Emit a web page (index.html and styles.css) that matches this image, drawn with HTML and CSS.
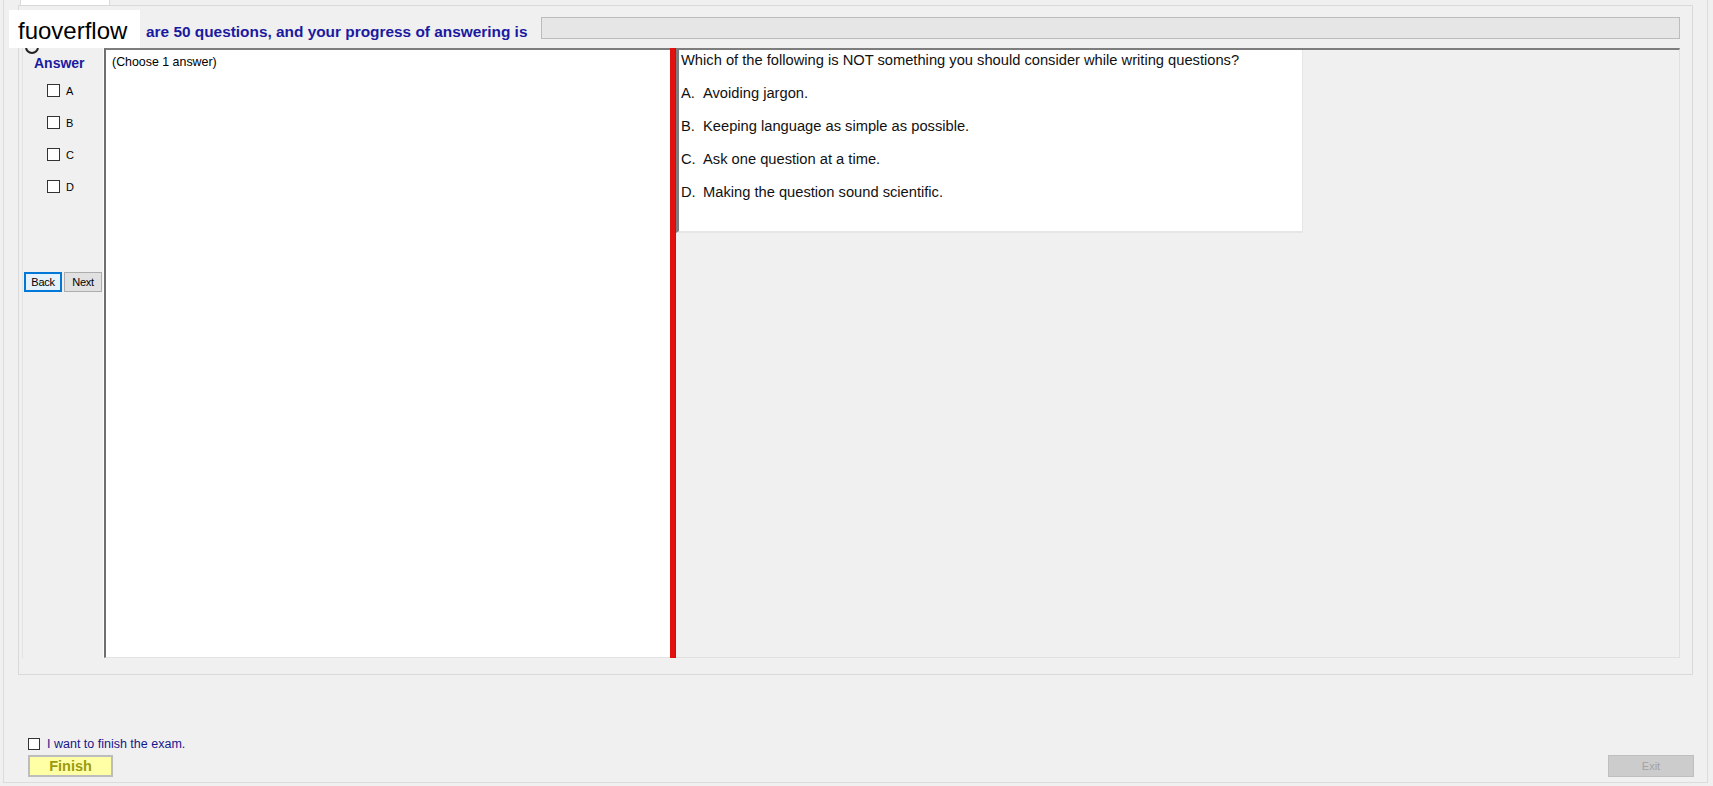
FILE: index.html
```html
<!DOCTYPE html>
<html>
<head>
<meta charset="utf-8">
<link rel="stylesheet" href="styles.css">
</head>
<body>
<div class="frame">
  <div class="tabctl">
    <div class="tabhead"><div class="tab"></div></div>
    <div class="tabpage">
      <div class="hdr">
        <div class="hdr-label">are 50 questions, and your progress of answering is</div>
        <div class="progress"></div>
      </div>
      <div class="split">
        <div class="answer-col">
          <div class="answer-title">Answer</div>
          <div class="opts">
            <label class="opt"><span class="cb"></span><span>A</span></label>
            <label class="opt"><span class="cb"></span><span>B</span></label>
            <label class="opt"><span class="cb"></span><span>C</span></label>
            <label class="opt"><span class="cb"></span><span>D</span></label>
          </div>
          <div class="navbtns">
            <button class="btn btn-back">Back</button>
            <button class="btn">Next</button>
          </div>
        </div>
        <div class="choose">(Choose 1 answer)</div>
        <div class="splitter"></div>
        <div class="qarea">
          <div class="qbox">
            <div class="qline">Which of the following is NOT something you should consider while writing questions?</div>
            <div class="qline"><span class="ql">A.</span>Avoiding jargon.</div>
            <div class="qline"><span class="ql">B.</span>Keeping language as simple as possible.</div>
            <div class="qline"><span class="ql">C.</span>Ask one question at a time.</div>
            <div class="qline"><span class="ql">D.</span>Making the question sound scientific.</div>
          </div>
        </div>
      </div>
      <div class="icon-peek"></div>
      <div class="watermark">fuoverflow</div>
    </div>
  </div>
  <div class="footer">
    <div class="footer-left">
      <label class="finish-check"><span class="cb"></span><span>I want to finish the exam.</span></label>
      <button class="finish">Finish</button>
    </div>
    <button class="exit" disabled>Exit</button>
  </div>
</div>
</body>
</html>
```
FILE: styles.css
```css
html, body {
  margin: 0;
  padding: 0;
}
body {
  width: 1713px;
  height: 786px;
  background: #f0f0f0;
  font-family: "Liberation Sans", Arial, sans-serif;
  overflow: hidden;
}
.frame {
  margin-left: 3px;
  width: 1705px;
  height: 783px;
  box-sizing: border-box;
  border-left: 1px solid #dcdcdc;
  border-right: 1px solid #dcdcdc;
  border-bottom: 1px solid #dcdcdc;
  display: flex;
  flex-direction: column;
}
.tabctl {
  margin-left: 14px;
  width: 1675px;
}
.tabhead {
  height: 5px;
  position: relative;
}
.tab {
  margin-left: 2px;
  width: 90px;
  height: 5px;
  box-sizing: border-box;
  background: #ffffff;
  border: 1px solid #d9d9d9;
  border-top: none;
  border-bottom: none;
}
.tabpage {
  position: relative;
  height: 670px;
  box-sizing: border-box;
  border: 1px solid #d9d9d9;
  background: #f0f0f0;
  padding: 11px 12px 0 3px;
}
.hdr {
  display: flex;
  height: 22px;
  align-items: center;
}
.hdr-label {
  width: 519px;
  box-sizing: border-box;
  padding-left: 124px;
  font-weight: bold;
  font-size: 15.4px;
  color: #1a1aa0;
  white-space: nowrap;
  padding-top: 7px;
}
.progress {
  flex: 1;
  height: 22px;
  box-sizing: border-box;
  background: #e6e6e6;
  border: 1px solid #bcbcbc;
}
.split {
  margin-top: 9px;
  height: 610px;
  display: flex;
}
.answer-col {
  width: 82px;
  box-sizing: border-box;
  border-left: 1px solid #e2e2e2;
  border-right: 1px solid #fbfbfb;
  display: flex;
  flex-direction: column;
}
.answer-title {
  margin-top: 7px;
  height: 16px;
  line-height: 16px;
  padding-left: 11px;
  font-weight: bold;
  font-size: 14px;
  color: #1a1aa0;
}
.opts {
  margin-top: 13px;
  display: flex;
  flex-direction: column;
  gap: 19px;
  padding-left: 24px;
}
.opt {
  display: flex;
  align-items: center;
  height: 13px;
  font-size: 11px;
  color: #000;
}
.cb {
  width: 13px;
  height: 13px;
  box-sizing: border-box;
  border: 1px solid #333333;
  background: #ffffff;
  margin-right: 6px;
  flex: none;
}
.navbtns {
  margin-top: 79px;
  display: flex;
  gap: 2px;
  padding-left: 1px;
}
.btn {
  width: 38px;
  height: 20px;
  box-sizing: border-box;
  padding: 0;
  font-family: "Liberation Sans", Arial, sans-serif;
  font-size: 11px;
  letter-spacing: -0.3px;
  color: #000;
  background: #e1e1e1;
  border: 1px solid #adadad;
}
.btn-back {
  border: 2px solid #0078d7;
  background: #e5f1fb;
}
.choose {
  width: 566px;
  box-sizing: border-box;
  background: #ffffff;
  border-left: 2px solid #6f6f6f;
  border-top: 2px solid #7d7d7d;
  border-bottom: 1px solid #e3e3e3;
  padding: 5px 0 0 6px;
  font-size: 12.4px;
  line-height: 14px;
  color: #000;
}
.splitter {
  width: 6px;
  background: #e31010;
  border-right: 1px solid #8a2a2a;
  box-sizing: border-box;
}
.qarea {
  flex: 1;
  box-sizing: border-box;
  border-top: 2px solid #7d7d7d;
  border-right: 1px solid #e0e0e0;
  border-bottom: 1px solid #e0e0e0;
  background: #f0f0f0;
}
.qbox {
  width: 627px;
  height: 183px;
  box-sizing: border-box;
  background: #ffffff;
  border-left: 3px solid #7d7d7d;
  border-right: 1px solid #e6e6e6;
  border-bottom: 2px solid #e6e6e6;
  padding: 2px 0 0 2px;
  font-size: 14.7px;
  color: #111;
}
.qline {
  height: 17px;
  line-height: 17px;
  margin-bottom: 16px;
  white-space: nowrap;
}
.ql {
  display: inline-block;
  width: 22px;
}
.watermark {
  position: absolute;
  left: -10px;
  top: 4px;
  width: 131px;
  height: 38px;
  background: #ffffff;
  font-size: 24px;
  line-height: 32px;
  padding: 5px 0 0 9px;
  box-sizing: border-box;
  color: #000;
}
.icon-peek {
  position: absolute;
  left: 6px;
  top: 34px;
  width: 10px;
  height: 10px;
  border-radius: 50%;
  border: 2px solid #222;
}
.footer {
  flex: 1;
  display: flex;
  justify-content: space-between;
  align-items: flex-end;
  padding: 0 13px 5px 24px;
}
.footer-left {
  display: flex;
  flex-direction: column;
  gap: 4px;
}
.finish-check {
  display: flex;
  align-items: center;
  font-size: 12.5px;
  color: #17178c;
}
.finish-check .cb {
  width: 12px;
  height: 12px;
  margin-right: 7px;
}
.finish {
  width: 85px;
  height: 22px;
  box-sizing: border-box;
  padding: 0;
  background: #ffffa6;
  border: 2px solid #bdbdbd;
  font-family: "Liberation Sans", Arial, sans-serif;
  font-weight: bold;
  font-size: 14.5px;
  color: #9a9a10;
}
.exit {
  width: 86px;
  height: 22px;
  box-sizing: border-box;
  padding: 0;
  background: #cccccc;
  border: 1px solid #bfbfbf;
  font-family: "Liberation Sans", Arial, sans-serif;
  font-size: 11px;
  color: #a3a3a3;
}
```
